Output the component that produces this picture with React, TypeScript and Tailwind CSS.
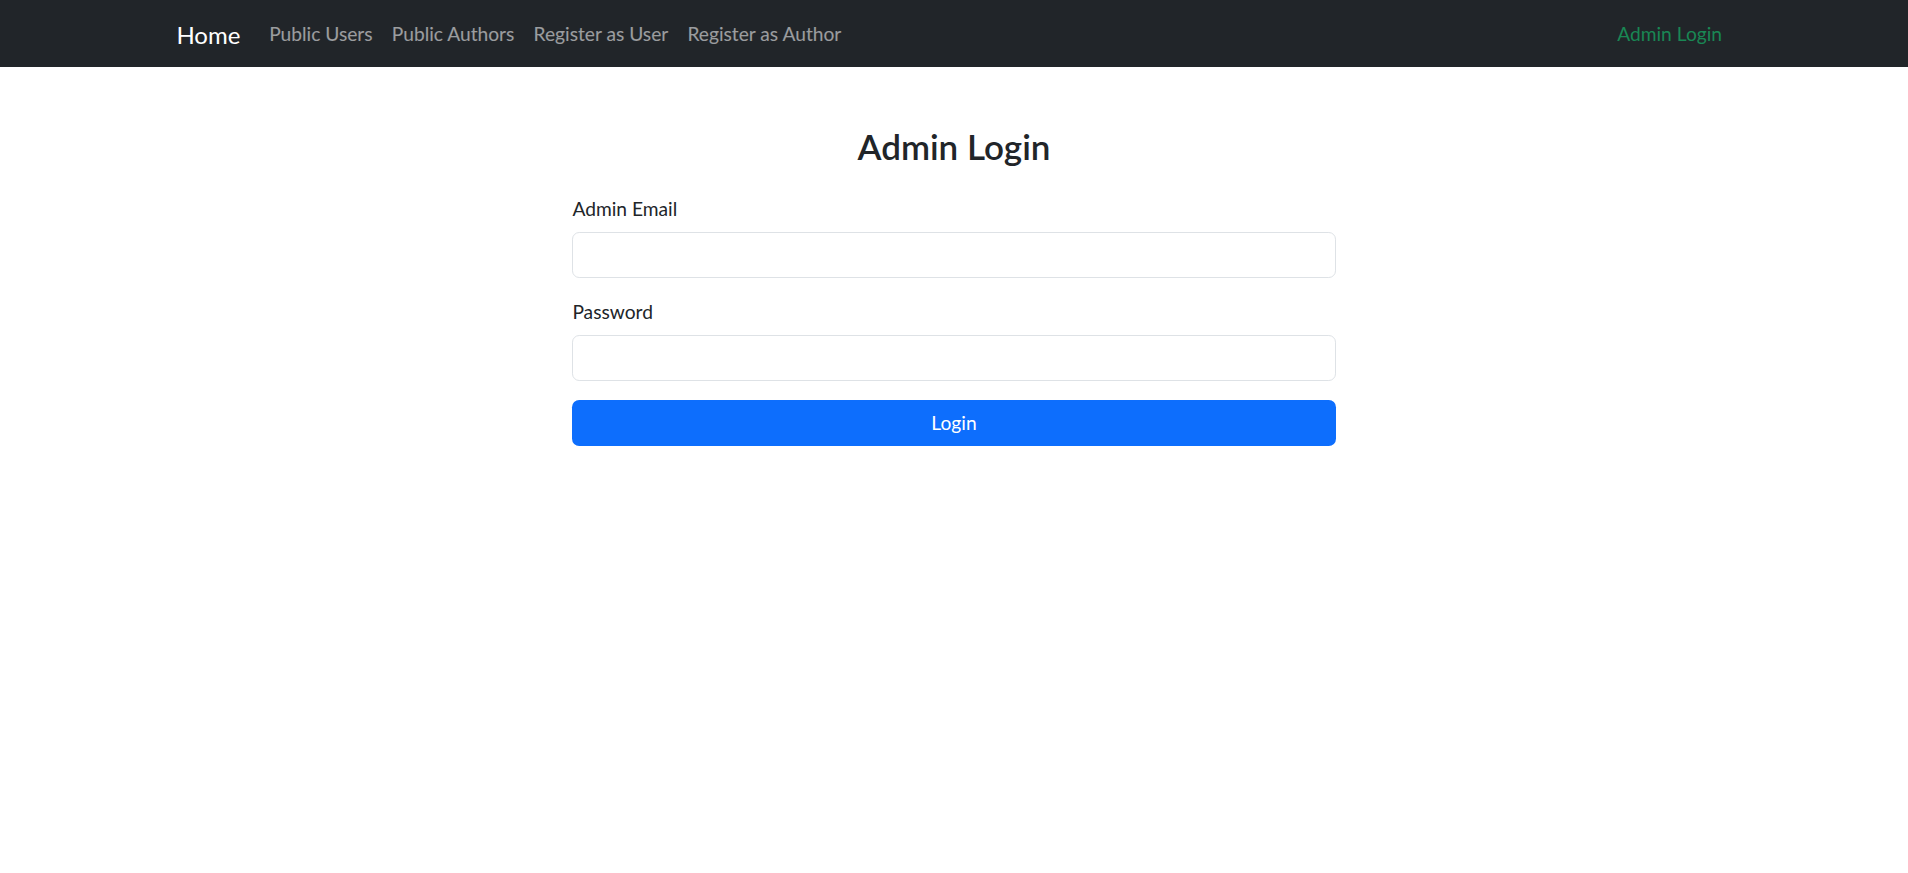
import { useState } from "react";

const navLinks = ["Public Users", "Public Authors", "Register as User", "Register as Author"];

function NavBar() {
  return (
    <nav className="bg-[#212529] py-[9.6px]">
      <div className="mx-auto flex w-[1584px] items-center justify-between px-[14.4px]">
        <div className="flex items-center">
          <a href="#" className="mr-[19.2px] pt-[7px] pb-[5px] text-[24px] leading-[36px] text-white">
            Home
          </a>
          <div className="flex items-center">
            {navLinks.map((label) => (
              <a
                key={label}
                href="#"
                className="px-[9.6px] pt-[10.6px] pb-[8.6px] text-[19.2px] leading-[28.8px] text-white/55"
              >
                {label}
              </a>
            ))}
          </div>
        </div>
        <a
          href="#"
          className="px-[9.6px] pt-[10.6px] pb-[8.6px] text-[19.2px] leading-[28.8px] text-[#198754]"
        >
          Admin Login
        </a>
      </div>
    </nav>
  );
}

export default function App() {
  const [email, setEmail] = useState("");
  const [password, setPassword] = useState("");

  return (
    <div className="min-h-screen bg-white text-[#212529] [font-family:Lato,'Noto_Sans',sans-serif]">
      <NavBar />

      {/* Login form */}
      <div className="mx-auto mt-[58.6px] w-[763.2px]">
        <h3 className="mb-[27.8px] text-center text-[35px] leading-[40.3px] font-semibold">
          Admin Login
        </h3>
        <form onSubmit={(e) => e.preventDefault()}>
          <div className="mb-[19.2px]">
            <label className="mb-[8.6px] block pt-[1px] text-[19.2px] leading-[28.8px]">
              Admin Email
            </label>
            <input
              type="email"
              value={email}
              onChange={(e) => setEmail(e.target.value)}
              className="block h-[45.6px] w-full rounded-[7.2px] border border-[#dee2e6] px-[14.4px] text-[19.2px] outline-none"
            />
          </div>
          <div className="mb-[19.2px]">
            <label className="mb-[8.6px] block pt-[1px] text-[19.2px] leading-[28.8px]">
              Password
            </label>
            <input
              type="password"
              value={password}
              onChange={(e) => setPassword(e.target.value)}
              className="block h-[45.6px] w-full rounded-[7.2px] border border-[#dee2e6] px-[14.4px] text-[19.2px] outline-none"
            />
          </div>
          <button
            type="submit"
            className="block h-[45.6px] w-full rounded-[7.2px] bg-[#0d6efd] text-[19.2px] leading-[28.8px] text-white"
          >
            Login
          </button>
        </form>
      </div>
    </div>
  );
}
